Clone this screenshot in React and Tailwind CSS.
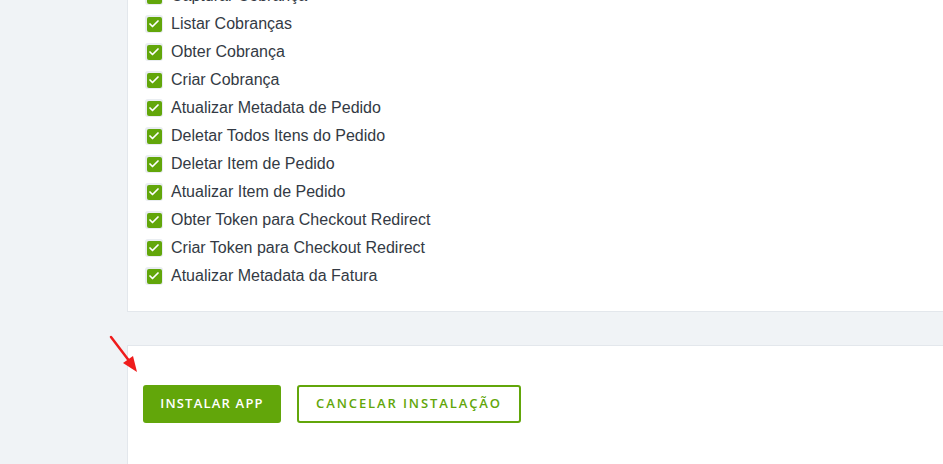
import { Check } from "lucide-react";

const items = [
  "Capturar Cobrança",
  "Listar Cobranças",
  "Obter Cobrança",
  "Criar Cobrança",
  "Atualizar Metadata de Pedido",
  "Deletar Todos Itens do Pedido",
  "Deletar Item de Pedido",
  "Atualizar Item de Pedido",
  "Obter Token para Checkout Redirect",
  "Criar Token para Checkout Redirect",
  "Atualizar Metadata da Fatura",
];

export default function App() {
  return (
    <main className="relative w-[943px] h-[464px] overflow-hidden bg-[#f0f3f6] font-['Liberation_Sans',Arial,sans-serif]">
      <div className="ml-[127px] -mt-[18px] bg-white border-b border-l border-[#e3e7ec] pl-[17px] pb-[21px]">
        <ul>
          {items.map((label) => (
            <li key={label} className="flex items-center h-[28px] gap-[8px]">
              <span className="w-[18px] h-[18px] rounded-[3px] bg-[#e9edf1] flex items-center justify-center">
                <span className="w-[15px] h-[15px] rounded-[2px] bg-[#62a60a] flex items-center justify-center">
                  <Check size={12} strokeWidth={3.5} className="text-white" />
                </span>
              </span>
              <span className="text-[16px] text-[#333a44]">{label}</span>
            </li>
          ))}
        </ul>
      </div>

      <div className="ml-[127px] mt-[33px] h-[200px] bg-white border-t border-l border-[#e3e7ec] pl-[15px] pt-[39px]">
        <div className="flex gap-[16px] font-['Open_Sans',sans-serif]">
          <button className="h-[38px] w-[138px] rounded-[3px] bg-[#62a60a] text-white text-[13px] font-semibold tracking-[1.2px]">
            INSTALAR APP
          </button>
          <button className="h-[38px] w-[224px] rounded-[3px] border-2 border-[#62a60a] text-[#62a60a] text-[13px] font-semibold tracking-[1.9px]">
            CANCELAR INSTALAÇÃO
          </button>
        </div>
      </div>

      <svg className="absolute left-[108px] top-[334px]" width="32" height="42" viewBox="0 0 32 42">
        <line x1="3" y1="3" x2="22" y2="28" stroke="#ef1c1c" strokeWidth="2.5" strokeLinecap="round" />
        <polygon points="29,38 15,29 25,22" fill="#ef1c1c" />
      </svg>
    </main>
  );
}
